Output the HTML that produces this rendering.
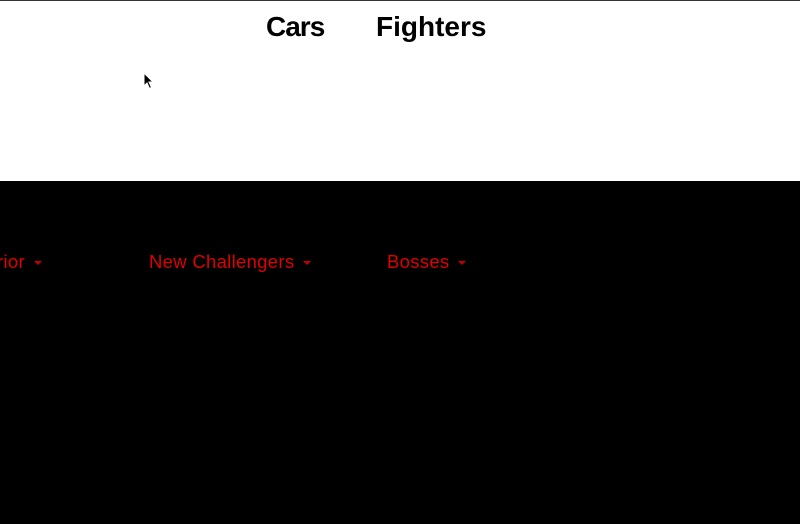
<!DOCTYPE html>
<html><head><style>
body{margin:0;width:800px;height:524px;overflow:hidden;background:#fff;font-family:"Liberation Sans",sans-serif;position:relative}
.top{position:absolute;left:0;top:0;width:800px;height:1px;background:#333}
.h{position:absolute;top:11px;font-weight:bold;font-size:28px;color:#000;letter-spacing:0}
.blk{position:absolute;left:0;top:181px;width:800px;height:343px;background:#000}
.r{position:absolute;top:251px;color:#e00000;font-size:18.5px;letter-spacing:0.3px;white-space:nowrap}
.r i{display:inline-block;width:0;height:0;border-left:4px solid transparent;border-right:4px solid transparent;border-top:4px solid #c00000;margin-left:9px;vertical-align:middle}
</style></head><body>
<div class="top"></div>
<div class="h" style="left:266px;letter-spacing:-1px">Cars</div>
<div class="h" style="left:376px">Fighters</div>
<svg style="position:absolute;left:143px;top:72px" width="12" height="18" viewBox="0 0 12 18"><path d="M1 1 L1 14 L4 11 L6.5 16.5 L8.5 15.5 L6 10 L10 10 Z" fill="#000" stroke="#fff" stroke-width="1"/></svg>
<div class="blk"></div>
<div class="r" style="left:-3px">rior<i></i></div>
<div class="r" style="left:149px">New Challengers<i></i></div>
<div class="r" style="left:387px">Bosses<i></i></div>
</body></html>
